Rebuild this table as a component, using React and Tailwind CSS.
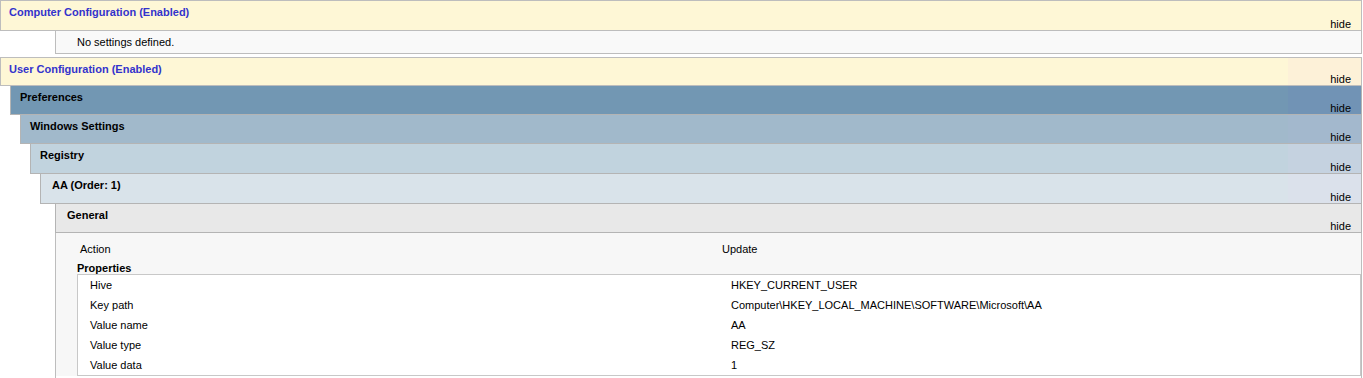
const levels = [
  { title: "Preferences", ml: "ml-[10px]", pl: "pl-[9px]", h: "h-[29px]", bg: "bg-[#7297b3]", side: "bg-[#7193b5]" },
  { title: "Windows Settings", ml: "ml-[20px]", pl: "pl-[9px]", h: "h-[29px]", bg: "bg-[#a1b9cb]", side: "bg-[#a3b8cd]" },
  { title: "Registry", ml: "ml-[30px]", pl: "pl-[9px]", h: "h-[30px]", bg: "bg-[#c1d3de]", side: "bg-[#c5d2e0]" },
  { title: "AA (Order: 1)", ml: "ml-[40px]", pl: "pl-[11px]", h: "h-[30px]", bg: "bg-[#d9e3ea]", side: "bg-[#dbe1eb]" },
  { title: "General", ml: "ml-[55px]", pl: "pl-[11px]", h: "h-[29px]", bg: "bg-[#e8e8e8]", side: "bg-[#e8e8e8]" },
];

const props = [
  ["Hive", "HKEY_CURRENT_USER"],
  ["Key path", "Computer\\HKEY_LOCAL_MACHINE\\SOFTWARE\\Microsoft\\AA"],
  ["Value name", "AA"],
  ["Value type", "REG_SZ"],
  ["Value data", "1"],
];

function Hide() {
  return <div className="self-end pr-[10px] leading-[12px]">hide</div>;
}

function TopHeader({ title, className, side }) {
  return (
    <div className={`flex border-x border-[#bdbdbd] bg-[#fef7d6] ${className}`}>
      <div className="flex-1 pl-[8px] pt-[4px] font-bold text-[#3333cc]">{title}</div>
      <div className={`flex w-[73px] flex-col justify-end ${side}`}>
        <Hide />
      </div>
    </div>
  );
}

export default function App() {
  return (
    <div
      className="w-[1363px] pr-[1px] text-[11px] leading-[14px] text-black"
      style={{ fontFamily: '"Liberation Sans", Arial, sans-serif' }}
    >
      <TopHeader
        title="Computer Configuration (Enabled)"
        className="h-[31px] border-y"
        side="bg-[#fef7d6]"
      />
      <div className="ml-[55px] flex h-[23px] items-center border-x border-b border-[#bdbdbd] bg-[#f9f9f9] pl-[21px]">
        No settings defined.
      </div>
      <div className="h-[3px]" />
      <TopHeader
        title="User Configuration (Enabled)"
        className="h-[29px] border-y"
        side="bg-[#fdf1d8]"
      />
      {levels.map((l) => (
        <div
          key={l.title}
          className={`flex border-x border-b border-[#b4b4b4] ${l.ml} ${l.h} ${l.bg}`}
        >
          <div className={`flex-1 pt-[4px] font-bold ${l.pl}`}>{l.title}</div>
          <div className={`flex w-[73px] flex-col justify-end ${l.side}`}>
            <Hide />
          </div>
        </div>
      ))}
      <div className="ml-[55px] border-x border-[#bdbdbd] bg-[#f7f7f7] pt-[6px]">
        <div className="flex h-[20px] items-center">
          <div className="w-[666px] pl-[24px]">Action</div>
          <div>Update</div>
        </div>
        <div className="h-[15px] pl-[21px] font-bold leading-[18px]">Properties</div>
        <div className="ml-[21px] border border-[#c8c8c8] bg-white">
          {props.map(([k, v]) => (
            <div key={k} className="flex h-[20px] items-center">
              <div className="w-[653px] pl-[12px]">{k}</div>
              <div>{v}</div>
            </div>
          ))}
        </div>
        <div className="h-[4px] bg-white" />
      </div>
    </div>
  );
}
